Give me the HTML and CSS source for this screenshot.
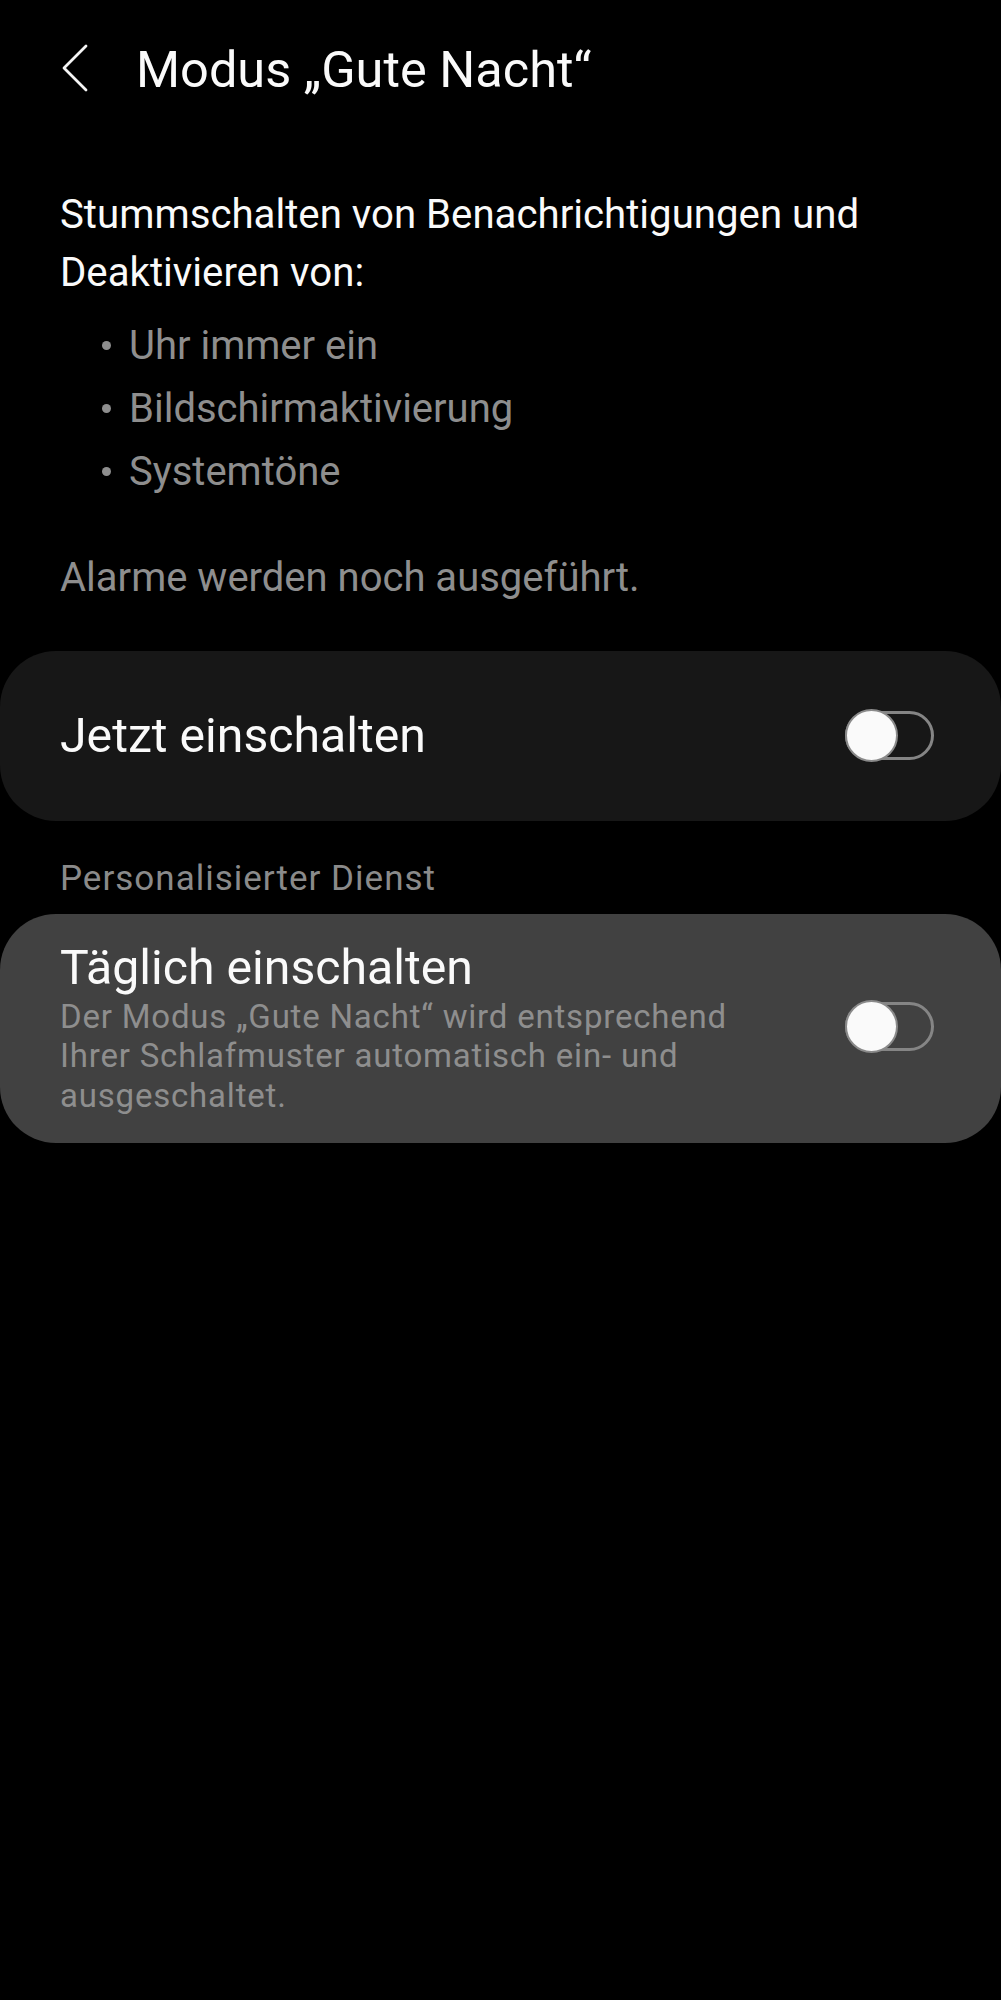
FILE: index.html
```html
<!DOCTYPE html>
<html lang="de">
<head>
<meta charset="utf-8">
<title>Modus „Gute Nacht“</title>
<link rel="stylesheet" href="styles.css">
</head>
<body>
<header class="topbar">
  <svg class="back" width="28" height="48" viewBox="0 0 28 48" aria-hidden="true">
    <path d="M25 2 L3 24 L25 46" fill="none" stroke="#f5f5f5" stroke-width="2.8" stroke-linecap="round" stroke-linejoin="round"/>
  </svg>
  <h1 class="title">Modus „Gute Nacht“</h1>
</header>
<main class="content">
  <p class="intro">Stummschalten von Benachrichtigungen und Deaktivieren von:</p>
  <ul class="list">
    <li>Uhr immer ein</li>
    <li>Bildschirmaktivierung</li>
    <li>Systemtöne</li>
  </ul>
  <p class="note">Alarme werden noch ausgeführt.</p>
</main>
<section class="card card-dark">
  <div class="card-title">Jetzt einschalten</div>
  <span class="switch"><span class="thumb"></span></span>
</section>
<div class="section-label">Personalisierter Dienst</div>
<section class="card card-grey">
  <div class="card-text">
    <div class="card-title">Täglich einschalten</div>
    <div class="card-sub">Der Modus „Gute Nacht“ wird entsprechend Ihrer Schlafmuster automatisch ein- und ausgeschaltet.</div>
  </div>
  <span class="switch"><span class="thumb"></span></span>
</section>
</body>
</html>
```
FILE: styles.css
```css
html, body {
  margin: 0;
  padding: 0;
  background: #000;
}
body {
  width: 1001px;
  min-height: 2000px;
  font-family: Roboto, "Noto Sans", "Liberation Sans", sans-serif;
  color: #fafafa;
}
.topbar {
  display: flex;
  align-items: flex-start;
  padding-top: 38px;
}
.back {
  margin-left: 61px;
  margin-top: 6px;
  flex: none;
}
.title {
  margin: 0 0 0 47px;
  font-size: 50.5px;
  font-weight: 400;
  line-height: 64px;
  color: #fafafa;
}
.content {
  padding: 0 60px;
}
.intro {
  margin: 83.5px 0 0;
  font-size: 40.2px;
  line-height: 58px;
  color: #fafafa;
}
.list {
  list-style: none;
  margin: 12px 0 0;
  padding: 0 0 0 69px;
}
.list li {
  position: relative;
  font-size: 40px;
  line-height: 63px;
  color: #8e8e8e;
}
.list li::before {
  content: "";
  position: absolute;
  left: -27px;
  top: 27px;
  width: 9px;
  height: 9px;
  border-radius: 50%;
  background: #8e8e8e;
}
.note {
  margin: 46px 0 0;
  font-size: 40px;
  line-height: 58px;
  color: #8e8e8e;
}
.card {
  display: flex;
  align-items: center;
  justify-content: space-between;
  border-radius: 56px;
  padding: 0 67px 0 60px;
}
.card-dark {
  margin-top: 44px;
  height: 170px;
  background: #171717;
}
.card-grey {
  margin-top: 13px;
  padding-top: 25px;
  padding-bottom: 28px;
  background: #414141;
}
.card-title {
  font-size: 48.2px;
  line-height: 58px;
  color: #fafafa;
}
.card-text {
  width: 710px;
}
.card-sub {
  font-size: 33px;
  line-height: 39.5px;
  letter-spacing: 0.8px;
  color: #8e8e8e;
}
.section-label {
  margin: 36px 0 0;
  padding-left: 60px;
  font-size: 35px;
  line-height: 44px;
  letter-spacing: 1px;
  color: #8a8a8a;
}
.switch {
  position: relative;
  flex: none;
  width: 83px;
  height: 43px;
  border: 3px solid #858585;
  border-radius: 26px;
}
.thumb {
  position: absolute;
  left: -3px;
  top: -5px;
  width: 49px;
  height: 49px;
  border: 2px solid #8a8a8a;
  border-radius: 50%;
  background: #fafafa;
}
```
